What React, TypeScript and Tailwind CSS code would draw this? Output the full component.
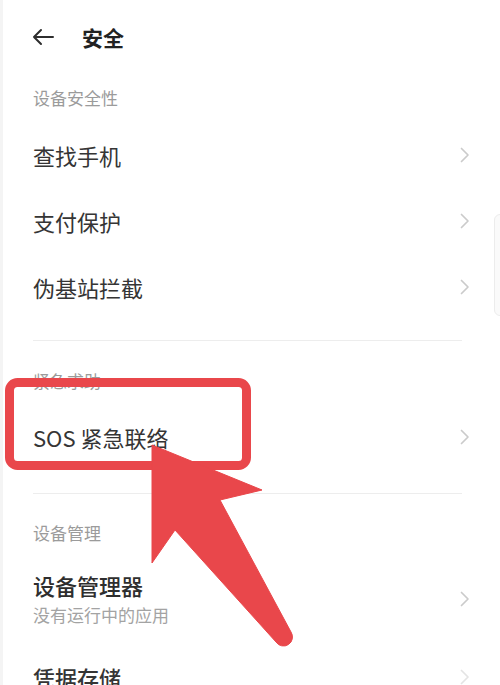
import React from "react";

const font = { fontFamily: '"Noto Sans CJK SC", "Noto Sans", sans-serif' };

function Chevron() {
  return (
    <svg width="10" height="16" viewBox="0 0 10 16" className="shrink-0">
      <polyline points="1.5,1.5 8,8 1.5,14.5" fill="none" stroke="#cbcbcb" strokeWidth="1.7" strokeLinecap="round" strokeLinejoin="round" />
    </svg>
  );
}

function Row({ title }: { title: string }) {
  return (
    <div className="flex items-center justify-between h-[66px] pl-[30px] pr-[30px]">
      <span className="text-[22px] leading-[28px] text-[#353535]">{title}</span>
      <Chevron />
    </div>
  );
}

function Divider({ top }: { top: string }) {
  return (
    <div className={`${top} pl-[30px] pr-[38px]`}>
      <div className="h-px bg-[#ededed]" />
    </div>
  );
}

export default function App() {
  return (
    <div style={font} className="relative w-[500px] h-[685px] overflow-hidden bg-white border-l-[3px] border-[#f4f4f4]">
      {/* title bar */}
      <div className="flex items-center h-[74px] pl-[28px]">
        <svg width="24" height="18" viewBox="0 0 24 18">
          <path d="M22 9 H3 M10 2 L3 9 L10 16" fill="none" stroke="#2e2e2e" strokeWidth="2" strokeLinecap="round" strokeLinejoin="round" />
        </svg>
        <span className="ml-[27px] text-[21px] leading-[28px] font-bold text-[#222]">安全</span>
      </div>

      <div className="flex items-center h-[48px] pl-[30px] text-[17px] text-[#9b9b9b]">设备安全性</div>
      <Row title="查找手机" />
      <Row title="支付保护" />
      <Row title="伪基站拦截" />
      <Divider top="pt-[20px]" />

      <div className="h-[63px] pt-[29px] pl-[30px] text-[17px] leading-[22px] text-[#9b9b9b]">紧急求助</div>
      <div className="flex items-center justify-between h-[66px] pl-[30px] pr-[30px]">
        <span className="text-[22px] leading-[28px] text-[#353535]">SOS 紧急联络</span>
        <Chevron />
      </div>
      <Divider top="pt-[23px]" />

      <div className="h-[61px] pt-[28px] pl-[30px] text-[17px] leading-[22px] text-[#9b9b9b]">设备管理</div>
      <div className="flex items-center justify-between pt-[16px] pb-[17px] pl-[30px] pr-[30px]">
        <div className="flex flex-col gap-[4px]">
          <span className="text-[22px] leading-[28px] font-medium text-[#2e2e2e]">设备管理器</span>
          <span className="text-[17px] leading-[24px] text-[#a3a3a3]">没有运行中的应用</span>
        </div>
        <Chevron />
      </div>
      <div className="flex items-center justify-between h-[66px] pl-[30px] pr-[30px]">
        <span className="text-[22px] leading-[28px] font-medium text-[#353535]">凭据存储</span>
        <div className="opacity-50">
          <Chevron />
        </div>
      </div>

      {/* faint right-edge panel */}
      <div className="absolute right-[-6px] top-[214px] w-[12px] h-[102px] rounded-[6px] border border-[#ececec] bg-[#fafafa]" />

      {/* annotation overlay */}
      <svg className="absolute left-[-3px] top-0 pointer-events-none" width="500" height="685" viewBox="0 0 500 685">
        <rect x="9.5" y="382.5" width="237" height="83" rx="8" fill="none" stroke="#e9474b" strokeWidth="9" />
        <path
          d="M152 445 L262 490 L220 500 L291 632 A9 9 0 0 1 276 642 L175 530 L152 563 Z"
          fill="#e9474b"
          stroke="#e9474b"
          strokeWidth="1"
          strokeLinejoin="round"
        />
      </svg>
    </div>
  );
}
